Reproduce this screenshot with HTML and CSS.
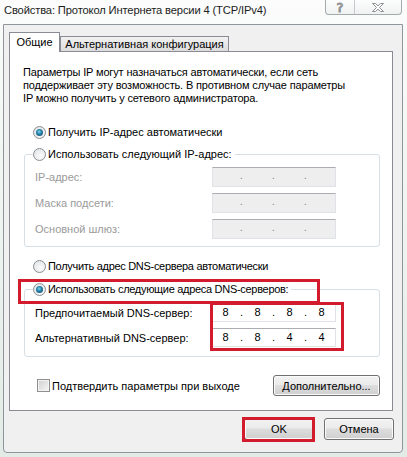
FILE: index.html
```html
<!DOCTYPE html>
<html lang="ru">
<head>
    <meta charset="UTF-8">
    <meta name="viewport" content="width=device-width, initial-scale=1.0">
    <title>Свойства: Протокол Интернета версии 4 (TCP/IPv4)</title>
    <link rel="stylesheet" href="styles.css">
</head>
<body>
    <div class="window">
        <div class="titlebar">
            <span class="title">Свойства: Протокол Интернета версии 4 (TCP/IPv4)</span>
            <div class="caption-btns">
                <span class="cap-btn help">?</span>
                <span class="cap-btn close">
                    <svg width="12" height="9" viewBox="0 0 12 9">
                        <path d="M0.5 0.5h3l2.5 2.3 2.5-2.3h3l-4 4 4 4h-3l-2.5-2.3-2.5 2.3h-3l4-4z" fill="#fff" stroke="#8c8f92" stroke-width="1" stroke-linejoin="round"/>
                    </svg>
                </span>
            </div>
        </div>

        <div class="dialog">
            <div class="tabs">
                <div class="tab active">Общие</div>
                <div class="tab">Альтернативная конфигурация</div>
            </div>

            <div class="panel">
                <p class="intro">Параметры IP могут назначаться автоматически, если сеть<br>поддерживает эту возможность. В противном случае параметры<br>IP можно получить у сетевого администратора.</p>

                <label class="option first"><span class="radio checked"></span>Получить IP-адрес автоматически</label>

                <fieldset class="group ip-group">
                    <legend><label class="option"><span class="radio"></span>Использовать следующий IP-адрес:</label></legend>
                    <div class="field disabled">
                        <span>IP-адрес:</span>
                        <span class="ip-box"><i></i><b>.</b><i></i><b>.</b><i></i><b>.</b><i></i></span>
                    </div>
                    <div class="field disabled">
                        <span>Маска подсети:</span>
                        <span class="ip-box"><i></i><b>.</b><i></i><b>.</b><i></i><b>.</b><i></i></span>
                    </div>
                    <div class="field disabled">
                        <span>Основной шлюз:</span>
                        <span class="ip-box"><i></i><b>.</b><i></i><b>.</b><i></i><b>.</b><i></i></span>
                    </div>
                </fieldset>

                <label class="option dns-auto tight"><span class="radio"></span>Получить адрес DNS-сервера автоматически</label>

                <fieldset class="group dns-group">
                    <legend><label class="option marked tight"><span class="radio checked"></span>Использовать следующие адреса DNS-серверов:</label></legend>
                    <div class="field">
                        <span>Предпочитаемый DNS-сервер:</span>
                        <span class="ip-box enabled dns-mark"><i>8</i><b>.</b><i>8</i><b>.</b><i>8</i><b>.</b><i>8</i></span>
                    </div>
                    <div class="field">
                        <span>Альтернативный DNS-сервер:</span>
                        <span class="ip-box enabled"><i>8</i><b>.</b><i>8</i><b>.</b><i>4</i><b>.</b><i>4</i></span>
                    </div>
                </fieldset>

                <div class="panel-footer">
                    <label class="check-option"><span class="checkbox"></span>Подтвердить параметры при выходе</label>
                    <button class="btn advanced">Дополнительно...</button>
                </div>
            </div>

            <div class="dialog-buttons">
                <button class="btn ok-btn">OK</button>
                <button class="btn">Отмена</button>
            </div>
        </div>
    </div>
</body>
</html>
```

FILE: styles.css
```css
* {
    box-sizing: border-box;
}

body {
    margin: 0;
    font-family: "Liberation Sans", Arial, sans-serif;
    font-size: 11px;
    color: #000;
    background: #e3ebe6;
}

.window {
    width: 407px;
    height: 457px;
    overflow: hidden;
    background: linear-gradient(#fbfcfb 0%, #f3f7f4 30%, #e2ebe5 100%);
}

/* title bar */

.titlebar {
    height: 24px;
    display: flex;
    align-items: flex-start;
}

.title {
    padding: 3px 0 0 4px;
    font-size: 11.2px;
    letter-spacing: -0.15px;
    line-height: 15px;
    color: #1c1c1c;
}

.caption-btns {
    margin-left: auto;
    margin-right: 5px;
    display: flex;
    height: 15px;
    border: 1px solid #a3abaf;
    border-top: none;
    border-radius: 0 0 4px 4px;
    background: linear-gradient(#fdfdfd, #eef2f0);
}

.cap-btn {
    display: flex;
    align-items: center;
    justify-content: center;
}

.help {
    width: 28px;
    font-size: 13px;
    line-height: 13px;
    color: #fff;
    -webkit-text-stroke: 1px #8c8f92;
    font-family: "DejaVu Sans", sans-serif;
}

.close {
    width: 47px;
    border-left: 1px solid #c4cacd;
}

/* dialog frame */

.dialog {
    margin: 0 4px 0 3px;
    height: 429px;
    border: 1px solid #8e969b;
    border-radius: 0 0 4px 4px;
    background: #f0f0f0;
    display: flex;
    flex-direction: column;
}

.tabs {
    display: flex;
    align-items: flex-end;
    padding: 7px 0 0 5px;
    margin-bottom: -1px;
    position: relative;
    z-index: 1;
}

.tab {
    height: 15px;
    margin-bottom: 1px;
    border: 1px solid #898c95;
    border-bottom: none;
    line-height: 14px;
    text-align: center;
    background: linear-gradient(#f2f2f2, #dcdcdc);
    width: 169px;
}

.tab.active {
    height: 20px;
    margin-bottom: 0;
    width: 51px;
    line-height: 19px;
    background: #fff;
}

.panel {
    margin-left: 5px;
    width: 384px;
    height: 360px;
    flex: none;
    border: 1px solid #898c95;
    background: #fff;
    padding: 14px 12px 12px 13px;
}

.intro {
    margin: 0;
    line-height: 13px;
    letter-spacing: -0.15px;
}

/* radios and checkbox */

.option {
    display: flex;
    align-items: center;
    gap: 2px;
    height: 16px;
    padding-left: 10px;
    white-space: nowrap;
}

.option.tight {
    letter-spacing: -0.3px;
}

.option.first {
    margin-top: 19px;
}

.radio {
    width: 13px;
    height: 13px;
    border-radius: 50%;
    border: 1px solid #8b9094;
    background: radial-gradient(circle at 60% 65%, #fbfbfb 0%, #dcdfe1 100%);
    display: flex;
    align-items: center;
    justify-content: center;
    flex: none;
}

.radio.checked::after {
    content: "";
    width: 7px;
    height: 7px;
    border-radius: 50%;
    background: radial-gradient(circle at 45% 40%, #7fd3ef 0%, #237ca3 45%, #0e4664 100%);
}

.check-option {
    display: flex;
    align-items: center;
    gap: 2px;
    padding-left: 14px;
}

.checkbox {
    width: 13px;
    height: 13px;
    border: 1px solid #8e8f8f;
    background: linear-gradient(135deg, #cfcfcf, #f7f7f7);
    box-shadow: inset 0 0 0 1px #f3f3f3;
}

/* group boxes */

.group {
    margin: 6px 0 0 1px;
    padding: 5px 10px 7px 10px;
    border: 1px solid #d5dfe5;
    border-radius: 3px;
    min-width: 0;
}

.group legend {
    padding: 0 3px 0 0;
    margin-left: -2px;
}

.group legend .option {
    padding-left: 0;
}

.dns-auto {
    margin-top: 11px;
}

.dns-group {
    margin-top: 7px;
    padding: 6px 10px 9px 10px;
}

.field {
    display: grid;
    grid-template-columns: 177px 124px;
    align-items: center;
    height: 20px;
}

.field + .field {
    margin-top: 6px;
}

.dns-group .field {
    height: 19px;
}

.field.disabled {
    color: #9a9a9a;
}

.ip-box {
    display: flex;
    height: 100%;
    border: 1px solid #dfe3e8;
    border-top-color: #abadb3;
    background: #eeeeee;
}

.ip-box i {
    width: 25px;
    font-style: normal;
    text-align: center;
    line-height: 17px;
}

.ip-box b {
    width: 7px;
    font-weight: normal;
    text-align: center;
    line-height: 15px;
    font-size: 10px;
    color: #7a7a7a;
}

.ip-box.enabled {
    background: #fff;
}

.ip-box.enabled b {
    color: #000;
    font-size: 11px;
    line-height: 17px;
}

/* red annotation frames */

.marked,
.dns-mark,
.ok-btn {
    position: relative;
}

.marked::after {
    content: "";
    position: absolute;
    left: -15px;
    top: -2px;
    width: 296px;
    height: 19px;
    border: 3px solid #d21b2c;
}

.dns-mark::after {
    content: "";
    position: absolute;
    left: -3px;
    top: -2px;
    width: 128px;
    height: 43px;
    border: 3px solid #d21b2c;
}

.ok-btn::after {
    content: "";
    position: absolute;
    inset: -2px -2px -3px -3px;
    border: 3px solid #d21b2c;
}

/* footer and buttons */

.panel-footer {
    margin-top: 18px;
    display: flex;
    justify-content: space-between;
    align-items: center;
}

.btn {
    font-family: inherit;
    font-size: 11px;
    color: #000;
    height: 22px;
    width: 70px;
    padding: 0;
    border: 1px solid #707070;
    border-radius: 3px;
    background: linear-gradient(#f2f2f2 0%, #ebebeb 45%, #dddddd 50%, #cfcfcf 100%);
    box-shadow: inset 0 0 0 1px #fbfbfb;
}

.btn.advanced {
    width: 107px;
    height: 21px;
}

.dialog-buttons {
    margin-top: 7px;
    display: flex;
    justify-content: flex-end;
    gap: 10px;
    padding-right: 8px;
}
```
